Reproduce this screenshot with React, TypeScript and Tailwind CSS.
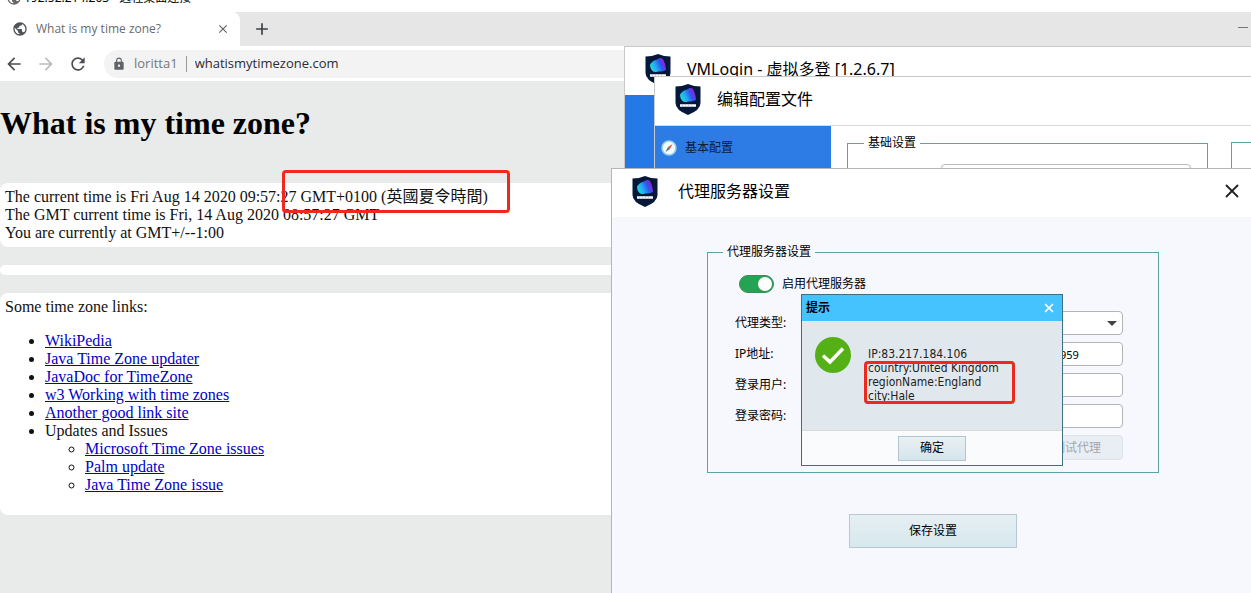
import React, { useState } from 'react';
import { X } from 'lucide-react';
import { MdAdd, MdArrowBack, MdArrowForward, MdClose, MdLock, MdPublic, MdRefresh } from 'react-icons/md';

const LINKS = [
  'WikiPedia',
  'Java Time Zone updater',
  'JavaDoc for TimeZone',
  'w3 Working with time zones',
  'Another good link site',
];

const UPDATE_LINKS = ['Microsoft Time Zone issues', 'Palm update', 'Java Time Zone issue'];

const Shield: React.FC<{ id: string }> = ({ id }) => (
  <svg viewBox="0 0 26 31" className="w-[26px] h-[31px] shrink-0" aria-hidden="true">
    <defs>
      <linearGradient id={id} x1="0" y1="0.7" x2="1" y2="0.3">
        <stop offset="0" stopColor="#22e0d8" />
        <stop offset="0.35" stopColor="#24a8f2" />
        <stop offset="0.65" stopColor="#2f55ee" />
        <stop offset="1" stopColor="#a022d8" />
      </linearGradient>
    </defs>
    <path d="M0.500 2.500 Q7 2.500 13 0 Q19 2.500 25.500 2.500 V19 Q25.500 26 13 31 Q0.500 26 0.500 19 Z" fill="#06183a" />
    <path d="M5 10.500 Q7.500 6.500 12 5.500 Q16.500 2.500 18.500 6 Q20.500 10 21 16 Q17 18 13 17.500 Q9.500 19 7 16.500 Q5 14 5 10.500 Z" fill={`url(#${id})`} />
    <path d="M15 5 Q17.500 4 19 8 L20.500 14 Q17.500 10 15 5 Z" fill="#8a1fe0" opacity="0.7" />
    <path d="M5 21.500 H21" stroke="#fff" strokeWidth="2.500" />
    <path d="M7.500 21.500 H8 M10.500 21.500 H11 M13.500 21.500 H14 M16.500 21.500 H17" stroke="#8fa0b8" strokeWidth="1.500" />
  </svg>
);

const BrowserTabs: React.FC = () => (
  <div className="flex h-[34px] bg-[#e6e6e6]">
    <div className="flex w-60 items-center rounded-tr-lg bg-white pl-3 pr-2.5 text-[#6b6b6b]">
      <MdPublic className="size-4 text-[#505357]" />
      <span className="ml-2 flex-1 font-['Open_Sans',sans-serif] text-xs">What is my time zone?</span>
      <button aria-label="Close tab">
        <MdClose className="size-3.5 text-[#5f6368]" />
      </button>
    </div>
    <button aria-label="New tab" className="ml-3">
      <MdAdd className="size-5 text-[#3c4043]" />
    </button>
    <button aria-label="Minimize" className="ml-auto mr-[3px] -mt-1">
      <span className="block h-px w-2.5 bg-[#777]" />
    </button>
  </div>
);

const Toolbar: React.FC = () => (
  <div className="flex h-[35px] items-center bg-white pl-1">
    <button aria-label="Back"><MdArrowBack className="size-5 text-[#4b4e52]" /></button>
    <button aria-label="Forward" className="ml-3"><MdArrowForward className="size-5 text-[#babcbe]" /></button>
    <button aria-label="Reload" className="ml-3"><MdRefresh className="size-5 text-[#4b4e52]" /></button>
    <div className="ml-4 flex h-7 flex-1 items-center rounded-l-full bg-[#f3f3f3] pl-2 font-['Open_Sans',sans-serif] text-[13px]">
      <MdLock className="size-3.5 text-[#5f6368]" />
      <span className="ml-2 text-[#75787b]">loritta1</span>
      <span className="mx-2 h-4 w-px bg-[#9a9a9a]" />
      <input
        aria-label="Address"
        defaultValue="whatismytimezone.com"
        className="flex-1 bg-transparent text-[#2b2d30] outline-none"
      />
    </div>
  </div>
);

const TimeZonePage: React.FC = () => (
  <main className="flex-1 bg-[#e9ebeb] font-['Liberation_Serif','Noto_Sans_CJK_TC',serif] text-base leading-[18px] text-[#111]">
    <h1 className="pt-6 pb-[42px] text-[32px] leading-9 font-bold text-black">What is my time zone?</h1>
    <div className="flex flex-col gap-[18px]">
      <section className="rounded-lg bg-white p-[5px]">
        <p className="h-[18px]">The current time is Fri Aug 14 2020 09:57:27 GMT+0100 (英國夏令時間)</p>
        <p>The GMT current time is Fri, 14 Aug 2020 08:57:27 GMT</p>
        <p>You are currently at GMT+/--1:00</p>
      </section>
      <section className="h-2.5 rounded-lg bg-white" />
      <section className="rounded-lg bg-white p-[5px]">
        <p>Some time zone links:</p>
        <ul className="my-4 list-disc pl-10">
          {LINKS.map(name => (
            <li key={name}>
              <a href="#" className="text-[#0000c8] underline">{name}</a>
            </li>
          ))}
          <li>
            Updates and Issues
            <ul className="list-[circle] pl-10">
              {UPDATE_LINKS.map(name => (
                <li key={name}>
                  <a href="#" className="text-[#0000c8] underline">{name}</a>
                </li>
              ))}
            </ul>
          </li>
        </ul>
      </section>
    </div>
  </main>
);

const MainWindow: React.FC = () => (
  <section className="absolute top-[46px] right-0 bottom-0 left-[624px] flex flex-col border-t border-l border-[#c9c9c9] bg-white">
    <header className="flex h-12 shrink-0 items-center pb-1 pl-5">
      <Shield id="logo-main" />
      <h2 className="ml-4 text-base">VMLogin - 虚拟多登 [1.2.6.7]</h2>
    </header>
    <div className="w-44 flex-1 bg-[#2479e6]" />
  </section>
);

const EditWindow: React.FC = () => (
  <section className="absolute top-[76px] right-0 bottom-0 left-[654px] flex flex-col border-t border-l border-[#c9c9c9] bg-white">
    <header className="flex h-12 shrink-0 items-center pb-1 pl-5">
      <Shield id="logo-edit" />
      <h2 className="ml-4 text-base">编辑配置文件</h2>
    </header>
    <div className="flex flex-1 border-t border-[#d8d8d8]">
      <nav className="w-44 bg-[#2d7be5]">
        <a href="#" className="flex h-11 items-center pl-1.5 text-xs text-[#0c1c3c]">
          <svg viewBox="0 0 16 16" className="size-4" aria-hidden="true">
            <circle cx="8" cy="8" r="7" fill="#f2fafc" stroke="#8fd0ea" strokeWidth="1.500" />
            <path d="M11.500 4 L9 9 L7 7 Z" fill="#e2583a" />
            <path d="M4.500 12 L7 7 L9 9 Z" fill="#5a6e80" />
          </svg>
          <span className="ml-2">基本配置</span>
        </a>
      </nav>
      <div className="flex flex-1 items-start gap-[23px] pt-2 pl-4">
        <fieldset className="flex-1 border border-[#5aa3a6] px-4 pt-3">
          <legend className="px-1 text-xs leading-[18px]">基础设置</legend>
          <input aria-label="名称" className="ml-[77px] block h-6 w-[250px] rounded-sm border border-[#b9b9b9]" />
        </fieldset>
        <div className="mt-2 h-10 w-5 border-t border-l border-[#5aa3a6]" />
      </div>
    </div>
  </section>
);

const FIELD = 'h-6 rounded-sm border border-[#b4b4b8] bg-white px-1 text-[11px]';

const ProxyForm: React.FC = () => {
  const [enabled, setEnabled] = useState(true);

  return (
    <fieldset className="w-[452px] border border-[#5aa3a6] pr-[35px] pb-3 pl-[27px] text-xs">
      <legend className="-ml-3 px-1 leading-[18px]">代理服务器设置</legend>
      <label className="mt-3.5 ml-1 flex h-[18px] items-center gap-2">
        <input
          type="checkbox"
          checked={enabled}
          onChange={e => setEnabled(e.target.checked)}
          className="peer sr-only"
        />
        <span className="flex h-[18px] w-[35px] justify-start rounded-full border border-[#3c8c5c] bg-[#9aa5a0] p-px peer-checked:justify-end peer-checked:bg-[#24a452]">
          <span className="size-3.5 rounded-full bg-white" />
        </span>
        启用代理服务器
      </label>
      <div className="mt-[18px] grid grid-cols-[72px_1fr] items-center gap-y-[7px]">
        <label htmlFor="type">代理类型:</label>
        <div className="relative flex">
          <select id="type" className={`${FIELD} w-full appearance-none`}>
            <option></option>
          </select>
          <svg viewBox="0 0 10 5" className="pointer-events-none absolute top-2.5 right-1.5 h-[5px] w-2.5" aria-hidden="true">
            <path d="M0 0 H10 L5 5 Z" fill="#444" />
          </svg>
        </div>
        <label htmlFor="ip">IP地址:</label>
        <div className="flex justify-between">
          <input id="ip" className={`${FIELD} w-44`} />
          <input aria-label="端口" defaultValue="959" className={`${FIELD} w-[68px]`} />
        </div>
        <label htmlFor="user">登录用户:</label>
        <input id="user" className={FIELD} />
        <label htmlFor="password">登录密码:</label>
        <input id="password" type="password" className={FIELD} />
        <button disabled className="col-start-2 h-[25px] w-[92px] justify-self-end rounded-sm border border-[#dfe3ec] bg-[#e9eef4] text-[#a3a6ac]">
          测试代理
        </button>
      </div>
    </fieldset>
  );
};

const AlertBox: React.FC = () => (
  <div role="alertdialog" aria-label="提示" className="absolute top-[294px] left-[801px] flex w-[262px] flex-col border border-[#3f6f82] bg-[#fafbfc] text-xs">
    <header className="flex h-[26px] items-center justify-between bg-[#45c3ff] pr-1.5 pl-1">
      <h3 className="font-bold">提示</h3>
      <button aria-label="关闭"><X className="size-3.5 text-white" strokeWidth={3} /></button>
    </header>
    <div className="flex h-[109px] items-start bg-[#e1e8ed] pt-[15px] pl-3">
      <svg viewBox="0 0 38 38" className="size-[38px]" aria-hidden="true">
        <circle cx="19" cy="19" r="18" fill="#55b015" />
        <path d="M9 19.500 L16 26 L29 12.500" fill="none" stroke="#fff" strokeWidth="3.500" />
      </svg>
      <div className="mt-[11px] ml-4 font-['DejaVu_Sans_Condensed','DejaVu_Sans',sans-serif] leading-[14px] text-[#222]">
        <p>IP:83.217.184.106</p>
        <p>country:United Kingdom</p>
        <p>regionName:England</p>
        <p>city:Hale</p>
      </div>
    </div>
    <footer className="flex h-[35px] items-center justify-center border-t border-[#d3dade]">
      <button className="h-[25px] w-[68px] border border-[#b3c5d3] bg-linear-to-b from-[#e9f0f4] to-[#d5e5ec]">确定</button>
    </footer>
  </div>
);

const ProxyWindow: React.FC = () => (
  <section className="absolute top-[168px] right-0 bottom-0 left-[611px] flex flex-col border-t border-l border-[#b5b5b5] bg-[#f7f7fe]">
    <header className="flex h-12 shrink-0 items-center bg-white pr-2 pb-1 pl-5">
      <Shield id="logo-proxy" />
      <h2 className="ml-5 flex-1 text-base">代理服务器设置</h2>
      <button aria-label="关闭窗口"><X className="size-[22px] text-[#222]" strokeWidth={2} /></button>
    </header>
    <div className="flex flex-col items-center pt-[26px] pl-[3px]">
      <ProxyForm />
      <button className="mt-[41px] h-[34px] w-[168px] border border-[#b9c8d3] bg-linear-to-b from-[#e6eff3] to-[#d6e8ee] text-xs">
        保存设置
      </button>
    </div>
  </section>
);

const App: React.FC = () => {
  return (
    <div className="relative flex h-screen flex-col overflow-hidden bg-white font-['Noto_Sans','Noto_Sans_CJK_SC',sans-serif] text-black">
      {/* Remote desktop caption, mostly above the top edge */}
      <div className="flex h-3 items-end overflow-hidden pb-1.5 pl-1.5 text-xs leading-4">
        <MdPublic className="size-4 shrink-0 text-[#666]" />
        <span className="ml-0.5">192.52.214.203 - 远程桌面连接</span>
      </div>
      <BrowserTabs />
      <Toolbar />
      <TimeZonePage />

      <MainWindow />
      <EditWindow />
      <ProxyWindow />
      <AlertBox />

      {/* Highlight marks */}
      <div className="pointer-events-none absolute top-[170px] left-[282px] h-[43px] w-[228px] rounded-sm border-3 border-[#ee2a20]" />
      <div className="pointer-events-none absolute top-[361px] left-[864px] h-[43px] w-[151px] rounded-sm border-3 border-[#ee2a20]" />
    </div>
  );
};

export default App;
